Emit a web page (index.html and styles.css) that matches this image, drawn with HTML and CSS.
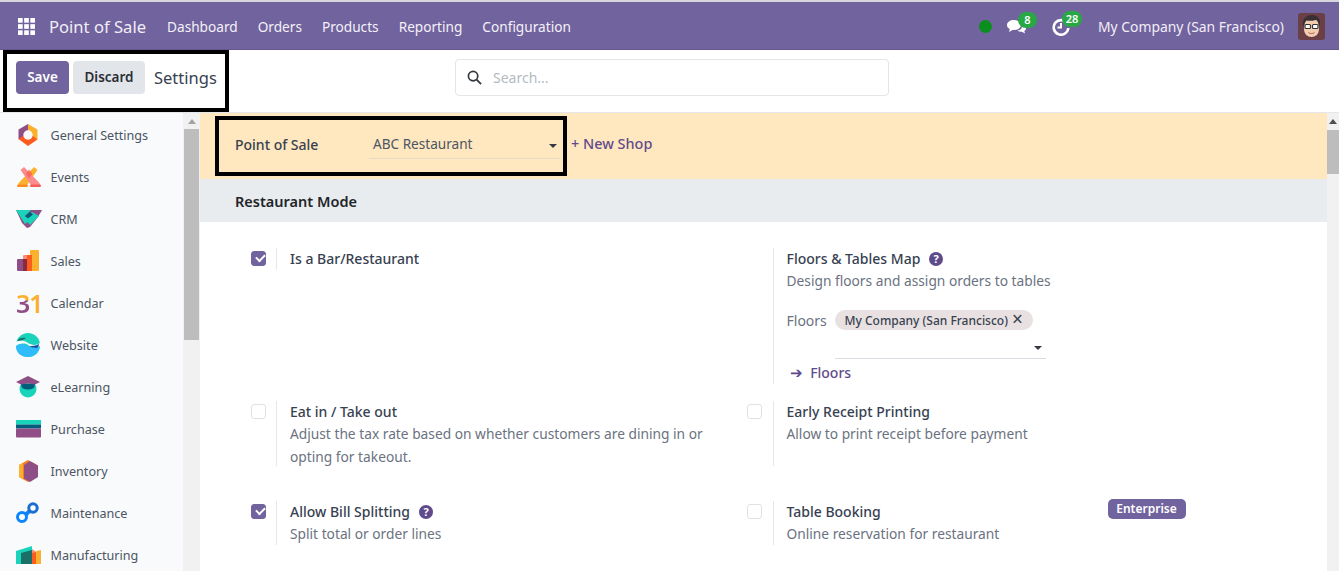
FILE: index.html
```html
<!DOCTYPE html>
<html lang="en">
<head>
<meta charset="utf-8">
<title>Settings</title>
<link rel="stylesheet" href="styles.css">
</head>
<body>
<div class="page">
  <header class="navbar">
    <svg class="apps" viewBox="0 0 16 16" width="17" height="17"><g fill="#fff"><rect x="0" y="0" width="4.4" height="4.4"/><rect x="5.8" y="0" width="4.4" height="4.4"/><rect x="11.6" y="0" width="4.4" height="4.4"/><rect x="0" y="5.8" width="4.4" height="4.4"/><rect x="5.8" y="5.8" width="4.4" height="4.4"/><rect x="11.6" y="5.8" width="4.4" height="4.4"/><rect x="0" y="11.6" width="4.4" height="4.4"/><rect x="5.8" y="11.6" width="4.4" height="4.4"/><rect x="11.6" y="11.6" width="4.4" height="4.4"/></g></svg>
    <span class="brand">Point of Sale</span>
    <nav class="menu">
      <span>Dashboard</span><span>Orders</span><span>Products</span><span>Reporting</span><span>Configuration</span>
    </nav>
    <div class="systray">
      <span class="status-dot"></span>
      <span class="tray-item chat">
        <svg viewBox="0 0 20 16" width="20" height="16"><path fill="#fff" d="M8 1c4 0 7 2.100 7 5s-3 5-7 5H6.500L3 13l.8-3C1.800 9 1 7.600 1 6c0-2.900 3-5 7-5z"/><path fill="#fff" d="M16.200 5.500C18.300 6.200 20 7.600 20 9.300c0 1.100-.7 2-1.700 2.700l.7 2.500-3-1.800c-1.800.1-3.500-.2-4.700-1 2.700-.2 5.500-2.300 4.900-6.700z"/></svg>
        <span class="badge b8">8</span>
      </span>
      <span class="tray-item clock">
        <svg viewBox="0 0 18 18" width="18" height="18"><path fill="none" stroke="#fff" stroke-width="2.600" d="M15.200 5.500A7.300 7.300 0 1 0 16.300 10"/><path fill="none" stroke="#fff" stroke-width="2" d="M9 5v4.500H5.500"/></svg>
        <span class="badge b28">28</span>
      </span>
      <span class="company">My Company (San Francisco)</span>
      <svg class="avatar" viewBox="0 0 27 27" width="27" height="27">
        <rect width="27" height="27" rx="3" fill="#6b3f46"/>
        <path fill="#f3cdb0" d="M6 11c0-4 3-6 7.500-6S21 7 21 11v5c0 5-3.500 8-7.500 8S6 21 6 16z"/>
        <path fill="#3a3033" d="M5 13C4 6 8 2 14 2s9 4 8 11l-1.500-1c0-3-1.500-5-3-5-3 1-7 1-9 .5C7 9 6.500 11 6.500 12z"/>
        <g fill="#fff" stroke="#333" stroke-width="1.200"><rect x="7" y="11.500" width="5.500" height="4" rx="1"/><rect x="14.500" y="11.500" width="5.500" height="4" rx="1"/></g>
        <path fill="#a85a50" d="M10 19c2 1.500 5 1.500 7 0-.5 2.500-6.500 2.500-7 0z"/>
      </svg>
    </div>
  </header>

  <section class="control">
    <div class="marked actions">
      <button class="btn save">Save</button>
      <button class="btn discard">Discard</button>
      <span class="crumb">Settings</span>
    </div>
    <div class="search">
      <svg viewBox="0 0 16 16" width="15" height="15"><circle cx="6.500" cy="6.500" r="5" fill="none" stroke="#343a40" stroke-width="1.800"/><path d="M10.300 10.300 15 15" stroke="#343a40" stroke-width="2"/></svg>
      <span>Search...</span>
    </div>
  </section>

  <div class="workspace">
    <aside class="sidebar">
      <ul class="apps-list">
        <li>
          <svg class="ic-gen" viewBox="0 0 20 22" width="20" height="22"><path fill="#fbb130" d="M10 0l9.500 5.500v10L10 11z"/><path fill="#8f4f86" d="M10 0L.5 5.500v10L10 11z"/><path fill="#fc5c1e" d="M.5 15l4.500-3h10l4.500 3.500L10 22z"/><circle cx="10" cy="11" r="4.700" fill="#f9fafb"/></svg>
          <span>General Settings</span>
        </li>
        <li>
          <svg viewBox="0 0 26 22" width="26" height="22"><path fill="#fbb130" d="M18 1l3.500 3L11 19H2c0-1 .5-2 1.500-3z"/><path fill="#fc8c8c" d="M8 1L4.500 4 15 19h9c0-1-.5-2-1.500-3z"/><path fill="#fc5c4e" d="M9.700 7.700 13 3.500l3.300 4.200-3.300 4.800z" opacity=".75"/><rect x="1" y="18.500" width="11" height="2.600" rx="1.300" fill="#fc8c1e"/><rect x="14" y="18.500" width="11" height="2.600" rx="1.300" fill="#f55c5c"/></svg>
          <span>Events</span>
        </li>
        <li>
          <svg viewBox="0 0 26 20" width="26" height="20"><path fill="#8f4f86" d="M0 1h26l-4 7-8 10-3 1-5-5z"/><path fill="#1ad3bb" d="M0 1h15L9 7l4 5-4 3z"/><path fill="#1ad3bb" d="M8 9l8-6 7 4-9 9z"/><path fill="#005e7a" d="M9 7l5-4 3 2.500-5 4z"/></svg>
          <span>CRM</span>
        </li>
        <li>
          <svg viewBox="0 0 24 24" width="24" height="24"><rect x="14" y="1" width="9" height="21" rx="1" fill="#fbb130"/><rect x="7" y="6" width="9" height="16" rx="1" fill="#fc8c7c"/><rect x="11" y="6" width="5" height="16" fill="#fc5c1e"/><rect x="1" y="10" width="10" height="12" rx="1" fill="#8f4f86"/><rect x="7" y="10" width="4" height="12" fill="#8a2a40"/></svg>
          <span>Sales</span>
        </li>
        <li>
          <span class="cal-icon"><span class="cal-3">3</span><span class="cal-1">1</span></span>
          <span>Calendar</span>
        </li>
        <li>
          <svg viewBox="0 0 24 24" width="24" height="24"><circle cx="12" cy="12" r="12" fill="#1ad3bb"/><path fill="#2ebcfa" d="M0 13c4-3 8-2 12 0s8 2 12-1c0 7-5 12-12 12S0 20 0 13z"/><path fill="#f9fafb" d="M0 9c5-3 9-1 12 1s8 3 12 0v3c-5 3-9 1-12-1s-8-2-12 1z"/><path fill="#1a6f66" d="M1 8c2-3 5-4 9-3-2 2-6 3-9 3z"/><path fill="#0e4da0" d="M13 13c3 0 7 0 10-2 0 2-1 3-2 4-3 0-6-1-8-2z"/></svg>
          <span>Website</span>
        </li>
        <li>
          <svg viewBox="0 0 24 22" width="24" height="22"><circle cx="12" cy="13" r="8.500" fill="#1ad3bb"/><path fill="#005e7a" d="M5 8h14l-1 4c-4 2-8 2-12 0z"/><path fill="#8f4f86" d="M12 0l12 6-5 2.500-7-1-7 1L0 6z"/></svg>
          <span>eLearning</span>
        </li>
        <li>
          <svg viewBox="0 0 25 18" width="25" height="18"><rect width="25" height="4.500" y="0" fill="#1ad3bb"/><rect width="25" height="4" y="4.500" fill="#005e7a"/><rect width="25" height="9" y="8.500" rx="1" fill="#8f4f86"/></svg>
          <span>Purchase</span>
        </li>
        <li>
          <svg class="ic-inv" viewBox="0 0 20 22" width="20" height="22"><path fill="#fc7c1e" d="M9 0l9 5v12l-9 5-9-5V5z" /><path fill="#fbb130" d="M0 5l4-2v16l-4-2z"/><path fill="#8f4f86" d="M11 1l8 4.500v11.500l-8 5-6-3.500V5z"/></svg>
          <span>Inventory</span>
        </li>
        <li>
          <svg viewBox="0 0 24 22" width="24" height="22"><path d="M7 15 17 6" stroke="#1a7ff0" stroke-width="4"/><circle cx="6" cy="15" r="4.500" fill="#fff" stroke="#0a84ff" stroke-width="3"/><circle cx="17" cy="6" r="4.200" fill="#fff" stroke="#1a6fd0" stroke-width="3"/></svg>
          <span>Maintenance</span>
        </li>
        <li>
          <svg viewBox="0 0 25 18" width="25" height="18"><path fill="#1ad3bb" d="M0 5l16-5v18H0z"/><path fill="#1a6f66" d="M5 7l11-3v14H5z"/><path fill="#fbb130" d="M17 6l8-2v14h-8z"/><path fill="#fc8c7c" d="M16 3l3 2v13h-3z"/><path fill="#fc5c1e" d="M16 7l4-1v12h-4z"/></svg>
          <span>Manufacturing</span>
        </li>
      </ul>
    </aside>
    <div class="scrollbar side-scroll"><span class="arrow"></span><span class="thumb"></span></div>

    <main class="content">
      <div class="shop-band">
        <div class="marked shop">
          <label class="shop-label">Point of Sale</label>
          <div class="shop-select"><span>ABC Restaurant</span><i class="caret"></i></div>
        </div>
        <span class="new-shop">+ New Shop</span>
      </div>
      <h2 class="section-title">Restaurant Mode</h2>
      <div class="settings">
        <div class="setting row-one">
          <div class="check-col"><span class="check on"></span></div>
          <div class="body short"><div class="title">Is a Bar/Restaurant</div></div>
        </div>
        <div class="setting row-one">
          <div class="check-col"></div>
          <div class="body">
            <div class="title">Floors &amp; Tables Map <svg class="help" viewBox="0 0 14 14" width="14" height="14"><circle cx="7" cy="7" r="7" fill="#5f4b8b"/><text x="7" y="11" text-anchor="middle" class="help-q">?</text></svg></div>
            <div class="desc">Design floors and assign orders to tables</div>
            <div class="floors">
              <span class="floors-label">Floors</span>
              <div class="floors-field">
                <span class="tag">My Company (San Francisco) <b>×</b></span>
                <div class="floors-input"><i class="caret"></i></div>
              </div>
            </div>
            <div class="floors-link"><span class="arr">➔</span> Floors</div>
          </div>
        </div>
        <div class="setting row-two">
          <div class="check-col"><span class="check"></span></div>
          <div class="body">
            <div class="title">Eat in / Take out</div>
            <div class="desc">Adjust the tax rate based on whether customers are dining in or opting for takeout.</div>
          </div>
        </div>
        <div class="setting row-two">
          <div class="check-col"><span class="check"></span></div>
          <div class="body">
            <div class="title">Early Receipt Printing</div>
            <div class="desc">Allow to print receipt before payment</div>
          </div>
        </div>
        <div class="setting">
          <div class="check-col"><span class="check on"></span></div>
          <div class="body">
            <div class="title">Allow Bill Splitting <svg class="help" viewBox="0 0 14 14" width="14" height="14"><circle cx="7" cy="7" r="7" fill="#5f4b8b"/><text x="7" y="11" text-anchor="middle" class="help-q">?</text></svg></div>
            <div class="desc">Split total or order lines</div>
          </div>
        </div>
        <div class="setting">
          <div class="check-col"><span class="check"></span></div>
          <div class="body">
            <div class="title-row"><div class="title">Table Booking</div><span class="enterprise">Enterprise</span></div>
            <div class="desc">Online reservation for restaurant</div>
          </div>
        </div>
      </div>
    </main>
    <div class="scrollbar main-scroll"><span class="arrow dark"></span><span class="thumb"></span></div>
  </div>
</div>
</body>
</html>
```
FILE: styles.css
```css
* { box-sizing: border-box; }
html, body { margin: 0; padding: 0; }
body { font-family: "Noto Sans", "Open Sans", sans-serif; font-size: 14px; color: #374151; background: #fff; }
.page { width: 1339px; height: 571px; overflow: hidden; display: flex; flex-direction: column; border-top: 2px solid #d6d6dc; }

.navbar { height: 48px; flex: none; background: #71639e; color: #f4f1f8; display: flex; align-items: center; padding: 2px 14px 0 18px; border-bottom: 1px solid #655890; }
.apps { flex: none; }
.brand { font-size: 16.600px; margin-left: 14px; color: #f1eef6; }
.menu { display: flex; gap: 20px; margin-left: 21px; font-size: 13.650px; }
.systray { margin-left: auto; display: flex; align-items: center; }
.status-dot { width: 13px; height: 13px; border-radius: 50%; background: #0a8f1f; }
.tray-item { position: relative; display: block; }
.tray-item svg { display: block; }
.chat { margin-left: 14px; }
.clock { margin-left: 26px; }
.badge { position: absolute; height: 16px; border-radius: 8px; background: #28a745; color: #fff; font-size: 11px; font-weight: 600; line-height: 16px; text-align: center; }
.b8 { left: 12px; top: -7px; width: 19px; }
.b28 { left: 10px; top: -7px; width: 20px; }
.company { margin-left: 28px; font-size: 13.900px; color: #f1eef6; }
.avatar { margin-left: 14px; flex: none; }

.control { height: 63px; flex: none; position: relative; display: flex; align-items: flex-start; padding-left: 3px; border-bottom: 1px solid #e5e7eb; }
.marked { border: 4px solid #000; }
.actions { width: 226px; height: 62px; display: flex; align-items: center; padding: 0 0 8px 9px; }
.btn { height: 33px; border: 0; border-radius: 4px; font: 600 13.500px "Noto Sans", sans-serif; padding: 0; }
.save { width: 53px; background: #71639e; color: #fff; }
.discard { width: 72px; margin-left: 4px; background: #e2e5e9; color: #2b2f36; }
.crumb { font-size: 16.500px; margin-left: 9px; color: #374151; }
.search { width: 434px; height: 37px; margin: 9px 0 0 226px; border: 1px solid #e3e5e8; border-radius: 4px; display: flex; align-items: center; gap: 11px; padding-left: 11px; color: #b4bac2; font-size: 14px; }

.workspace { flex: 1; display: flex; min-height: 0; }
.sidebar { width: 183px; flex: none; background: #f9fafb; overflow: hidden; }
.apps-list { list-style: none; margin: 0; padding: 1px 0 0; }
.apps-list li { height: 42px; display: flex; align-items: center; position: relative; padding-left: 50.500px; color: #4b5563; font-size: 12.600px; }
.apps-list svg, .cal-icon { position: absolute; left: 16px; top: 50%; transform: translateY(-50%); }
.apps-list .ic-gen { left: 18px; }
.apps-list .ic-inv { left: 19px; }
.cal-icon { font-weight: 600; font-size: 25px; line-height: 25px; display: flex; letter-spacing: -1px; }
.cal-3 { color: transparent; background: linear-gradient(#fbb130 42%, #8f4f86 42%); -webkit-background-clip: text; background-clip: text; }
.cal-1 { color: #fbb130; }

.scrollbar { flex: none; background: #f1f1f1; display: flex; flex-direction: column; align-items: center; }
.side-scroll { width: 17px; }
.main-scroll { width: 12px; }
.arrow { width: 0; height: 0; margin: 6px 0 5px; border: 4px solid transparent; border-top: 0; border-bottom: 5px solid #a3a3a3; }
.arrow.dark { border-bottom-color: #505050; }
.thumb { background: #bdbdbd; display: block; }
.side-scroll .thumb { width: 15px; height: 211px; }
.main-scroll .thumb { width: 12px; height: 44px; margin-top: 1px; }

.content { flex: 1; min-width: 0; }
.shop-band { height: 66px; background: #ffe8bf; display: flex; align-items: center; padding-left: 15px; }
.shop { width: 352px; height: 60px; display: flex; align-items: center; padding-left: 16px; margin-top: -1px; }
.shop-label { font-weight: 500; font-size: 14px; width: 134px; color: #374151; padding-bottom: 2px; }
.shop-select { width: 192px; height: 26px; border-bottom: 1px solid #e5dcc5; display: flex; align-items: center; justify-content: space-between; padding: 0 4px 3px; font-size: 13.600px; color: #4b5563; }
.shop-select .caret { margin-top: 4px; }
.caret { display: block; width: 0; height: 0; border: 4px solid transparent; border-bottom: 0; border-top: 4px solid #343a40; }
.new-shop { margin: -5px 0 0 4px; color: #5f4b8b; font-weight: 500; font-size: 14.450px; }
.section-title { margin: 0; height: 43px; background: #e9ecef; font-size: 14.500px; font-weight: 600; padding-left: 35px; line-height: 45px; color: #212529; }

.settings { display: grid; grid-template-columns: 496.500px 496.500px; padding: 26px 0 0 35px; }
.setting { display: flex; align-items: stretch; }
.row-one { height: 136px; margin-bottom: 17px; }
.row-two { height: 65px; margin-bottom: 35px; }
.check-col { width: 41px; padding: 2.500px 0 0 16px; flex: none; }
.setting:nth-child(even) .check { margin-left: -1px; }
.check { display: block; width: 15px; height: 15px; border-radius: 3px; border: 1px solid #dee2e6; background: #fff; position: relative; }
.check.on { background: #71639e; border-color: #71639e; }
.check.on::after { content: ""; position: absolute; left: 3.500px; top: 2.500px; width: 7px; height: 4px; border-left: 2px solid #fff; border-bottom: 2px solid #fff; transform: rotate(-45deg); }
.body { flex: none; width: 442px; border-left: 1px solid #e5e7eb; padding-left: 13px; }
.body.short { height: 22px; }
.setting:nth-child(even) .body { width: 413px; }
.title { font-weight: 500; font-size: 14px; line-height: 21px; color: #374151; }
.title-row { display: flex; justify-content: space-between; align-items: flex-start; }
.enterprise { background: #71639e; color: #fff; font-weight: 600; font-size: 12px; height: 20px; line-height: 20px; width: 78px; text-align: center; border-radius: 5px; margin-top: -2px; }
.desc { font-size: 13.750px; line-height: 23px; color: #6b7280; }
.help { vertical-align: -1.500px; margin-left: 5px; }
.help-q { fill: #fff; font-size: 11px; font-weight: 700; font-family: "Noto Sans", sans-serif; }
.floors { display: flex; margin-top: 18px; }
.floors-label { font-size: 14px; width: 48px; line-height: 22px; color: #6b7280; }
.floors-field { width: 211px; }
.tag { display: inline-block; height: 20px; line-height: 18px; background: #e9e1e1; border-radius: 10px; padding: 1px 10px; font-size: 12px; font-weight: 500; color: #374151; white-space: nowrap; }
.tag b { font-weight: 400; font-size: 19px; line-height: 16px; margin-left: 1px; vertical-align: -1px; }
.floors-input { height: 29px; border-bottom: 1px solid #d9dce0; display: flex; align-items: center; justify-content: flex-end; padding: 8px 4px 0 0; }
.floors-link { margin-top: 2px; color: #5f4b8b; font-weight: 500; font-size: 14px; line-height: 22px; padding-left: 3px; }
.arr { font-size: 15px; margin-right: 4px; }
```
